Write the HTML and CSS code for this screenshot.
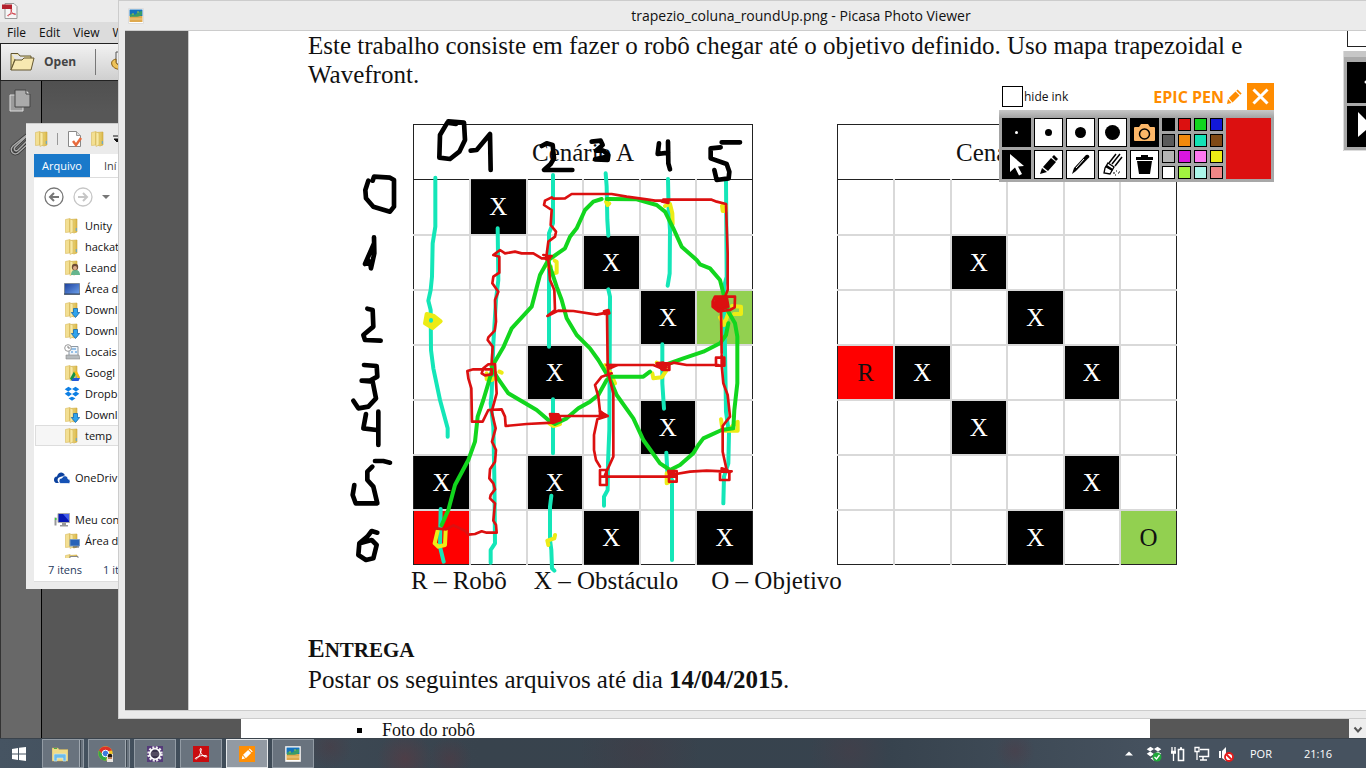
FILE: index.html
```html
<!DOCTYPE html>
<html lang="pt-BR">
<head>
<meta charset="utf-8">
<title>trapezio_coluna_roundUp.png - Picasa Photo Viewer</title>
<link rel="stylesheet" href="styles.css">
</head>
<body>
<svg class="defs" aria-hidden="true">
  <defs>
    <linearGradient id="gold" x1="0" x2="1"><stop offset="0" stop-color="#fdf3b8"/><stop offset=".5" stop-color="#e8cf6c"/><stop offset="1" stop-color="#d9b54a"/></linearGradient>
    <linearGradient id="sky" x1="0" y1="0" x2="1" y2="1"><stop offset="0" stop-color="#1c3f9c"/><stop offset="1" stop-color="#6fa4ee"/></linearGradient>
  </defs>
  <symbol id="folder" viewBox="0 0 16 16"><path d="M1.500 1.500 6 .5V14l-4.500.5Z" fill="#f3df92" stroke="#d8bb5c" stroke-width=".6"/><path d="M6 1.500 13 1v13l-3 1-4-1.500Z" fill="url(#gold)" stroke="#cfa93e" stroke-width=".6"/><path d="M6 1v14.500L9 14V2Z" fill="#f8e9a4" stroke="#cfae50" stroke-width=".5"/><path d="M12.300 10v3" stroke="#58a7e0"/></symbol>
  <symbol id="down" viewBox="0 0 16 16"><use href="#folder"/><path d="M9.500 6.500h4v4h2.200L11.500 15.500 7.300 10.500h2.200Z" fill="#2fa4ee" stroke="#1769ad" stroke-width=".8"/></symbol>
  <symbol id="photo" viewBox="0 0 16 16"><path d="M.5.5h15v15H.5Z" fill="#fff" stroke="#ddd"/><path d="M1.500 1.500h13V8h-13Z" fill="#1572bd"/><path d="M1.500 8h13v6h-13Z" fill="#dfa94e"/><path d="M2 7c2-3 4 1 6-1s3-2 6-3v4c-5 3-8 1-12 2Z" fill="#3a9c68"/><path d="M9 4h2M4 6h2" stroke="#a8c83d"/><path d="M2 11h12" stroke="#f0cd82"/></symbol>
  <symbol id="pencil" viewBox="0 0 16 16"><path d="m1 15 1-5 3.500 4Z"/><path d="m2.800 9 6.700-6.500 4 4L6.500 13.500Z"/><path d="m10.400 1.700 1.200-1.200 4 4-1.200 1.200Z"/></symbol>
  <symbol id="acro" viewBox="0 0 16 16"><path d="M2.500 12.800c1.400 1 3.700-2.600 4.700-5.200S8.800 2.200 7.700 2.400 7 6.300 9 8.600s4.800 3 5 1.800-5-1.400-8.500.2-3.400 1.500-3 2.200Z" fill="none" stroke="currentColor"/></symbol>
</svg>

<div class="desktop">
  <div class="workspace">

    <section class="reader" aria-label="Reader">
      <div class="reader-title">
        <svg class="i16" viewBox="0 0 16 16"><path d="M3 .5h9l3 3v12H3Z" fill="#f6f6f6" stroke="#999"/><path d="M0 1.500h10v4.500H0Z" fill="#b3202c"/><g color="#c8202c"><use href="#acro" x="4" y="4" width="11" height="11"/></g></svg>
      </div>
      <nav class="reader-menu"><button>File</button><button>Edit</button><button>View</button><button>Window</button></nav>
      <div class="reader-tools">
        <button class="open">
          <svg width="25" height="20" viewBox="0 0 25 20"><path d="M1 1.500h7l2 2.500h11v3M1 1.500V18l4-11" fill="#f1e2a5" stroke="#5f542f"/><path d="M1 18 5 8h7l2-2h10l-3 12Z" fill="#f7e8b1" stroke="#65572f"/></svg>
          <span>Open</span>
        </button>
        <i class="tool-rule"></i>
        <svg width="20" height="22" viewBox="0 0 20 22"><path d="M6 1h12v12H6Z" fill="#eee" stroke="#555"/><path d="M6 8c-4 1-5 3-4 6s6 5 12 5v-4c-5 0-8-2-8-4Z" fill="#eec35a" stroke="#865c12"/></svg>
      </div>
      <div class="reader-body">
        <aside class="reader-side">
          <svg width="22" height="24" viewBox="0 0 22 24"><path d="M1 6h13v16H1Z" fill="#9b9b9b" stroke="#ddd"/><path d="M6 1h11l4 4v13H6Z" fill="#aaa" stroke="#444"/><path d="M17 1v4h4" fill="#ddd" stroke="#444"/></svg>
          <svg width="22" height="24" viewBox="0 0 22 24"><path d="m19 3-13 12c-2 3 1 5 3 3L19 8M20 1 4 14c-5 5 2 11 6 6l10-9" fill="none" stroke="#333" stroke-width="3"/><path d="m19 3-13 12c-2 3 1 5 3 3L19 8M20 1 4 14c-5 5 2 11 6 6l10-9" fill="none" stroke="#aaa" stroke-width="1.500"/></svg>
        </aside>
        <div class="reader-canvas"><div class="reader-page"><ul><li>Foto do robô</li></ul></div></div>
        <div class="reader-scroll"><svg width="10" height="8" viewBox="0 0 10 8"><path d="m1.500 1.500 3.500 4 3.500-4" fill="none" stroke="#555" stroke-width="2"/></svg></div>
      </div>
    </section>

    <section class="explorer" aria-label="temp">
      <div class="ex-title">
        <svg class="i16"><use href="#folder"/></svg><i></i>
        <svg class="i16" viewBox="0 0 16 16"><path d="M1.500.5h8l4 4v11h-12Z" fill="#fff" stroke="#888"/><path d="M9.500.5v4h4" fill="#ddd" stroke="#999"/><path d="m6 10 3 4 5-7" fill="none" stroke="#e86b3d" stroke-width="2.500"/></svg>
        <svg class="i16"><use href="#folder"/></svg>
        <svg width="8" height="8" viewBox="0 0 8 8"><path d="M0 1h8M1 4h6L4 7Z" stroke="#111" fill="#111"/></svg>
      </div>
      <div class="ex-tabs"><button class="file">Arquivo</button><button>Iní</button></div>
      <div class="ex-nav">
        <svg width="20" height="20" viewBox="0 0 20 20" fill="none" stroke="#777"><circle cx="10" cy="10" r="9" stroke-width="1.300"/><path d="M15 10H6m4-4-4 4 4 4" stroke-width="2"/></svg>
        <svg width="20" height="20" viewBox="0 0 20 20" fill="none" stroke="#c6c6c6"><circle cx="10" cy="10" r="9" stroke-width="1.300"/><path d="M5 10h9m-4-4 4 4-4 4" stroke-width="2"/></svg>
        <svg width="8" height="4" viewBox="0 0 8 4"><path d="M0 0h8L4 4Z" fill="#777"/></svg>
      </div>
      <ul class="tree">
        <li><svg class="i16"><use href="#folder"/></svg><a href="#">Unity</a></li>
        <li><svg class="i16"><use href="#folder"/></svg><a href="#">hackat</a></li>
        <li><svg class="i16" viewBox="0 0 16 16"><use href="#folder"/><path d="M7 15c0-7 9-7 9 0Z" fill="#66b58d"/><circle cx="11" cy="7" r="3.200" fill="#6f4b35"/><circle cx="11" cy="8" r="2" fill="#d8a989"/></svg><a href="#">Leand</a></li>
        <li><svg class="i16" viewBox="0 0 16 16"><path d="M.5 2.500h15v11H.5Z" fill="url(#sky)" stroke="#7b8899"/><path d="M0 13h16" stroke="#32435a"/></svg><a href="#">Área d</a></li>
        <li><svg class="i16"><use href="#down"/></svg><a href="#">Downl</a></li>
        <li><svg class="i16"><use href="#down"/></svg><a href="#">Downl</a></li>
        <li><svg class="i16" viewBox="0 0 16 16"><path d="M5 2.500h9v9H5Z" fill="#eef4fa" stroke="#8d98a3"/><path d="M7 5h5M7 8h2m2 0h2" stroke="#3d8cd5"/><path d="M2 11h13l1 4H2Z" fill="#b5babd" stroke="#888" stroke-width=".6"/><circle cx="4" cy="4" r="3.300" fill="#fff" stroke="#999"/><path d="M4 2v2h2" fill="none" stroke="#666" stroke-width=".8"/></svg><a href="#">Locais</a></li>
        <li><svg class="i16" viewBox="0 0 16 16"><use href="#folder"/><path d="m10 6.500-4 7 2 2.500 4-7Z" fill="#159348"/><path d="M10 6.500h3l3.500 6.500h-3Z" fill="#fbbc14"/><path d="M9 13h7l-1.500 3H7.500Z" fill="#2459d8"/></svg><a href="#">Googl</a></li>
        <li><svg class="i16" viewBox="0 0 16 16"><path d="m4.500.8 3.500 2.200-3.800 2.500L.7 3.200Zm7 0 3.800 2.400L12 5.500 8 3ZM.7 7.800l3.500-2.300L8 8l-3.500 2.500Zm11.300-2.300 3.300 2.300-3.800 2.700L8 8Zm-4 5.300 3.500 1.500L8 14.800l-3.500-2.500Z" fill="#0d7fe4"/></svg><a href="#">Dropb</a></li>
        <li><svg class="i16"><use href="#down"/></svg><a href="#">Downl</a></li>
        <li class="current"><svg class="i16"><use href="#folder"/></svg><a href="#">temp</a></li>
        <li class="root"><svg class="i16" viewBox="0 0 16 16"><path d="M0 10c0-3 2-3.500 3-3.500C4 2 9 1 11 5.500L6 7c-3 1-3 4-1 6H2.500C1 13 0 11.500 0 10Z" fill="#0b419e"/><path d="M5 11c0-2 1.500-3 3-3 1-3 5.500-3 6 1 3 .5 2.500 4.500.5 4.500H7C6 13.500 5 12.500 5 11Z" fill="#1552b5" stroke="#fff" stroke-width=".7"/></svg><a href="#">OneDriv</a></li>
        <li class="root"><svg class="i16" viewBox="0 0 16 16"><path d="M.5 5.500h2v8h-2Z" fill="#999"/><path d="M1 6h1.500v2H1Z" fill="#3ccc41"/><path d="M4 1.500h11.500v9H4Z" fill="#0718b4" stroke="#aaa"/><path d="m9 2 6 7V2Z" fill="#435dec"/><path d="M8 11h4v2h2v1.500H6V13h2Z" fill="#999"/></svg><a href="#">Meu con</a></li>
        <li><svg class="i16" viewBox="0 0 16 16"><use href="#folder"/><path d="M6 6.500h9.500v6.500H6Z" fill="#2863b8" stroke="#789bc4"/><path d="M9 14h6" stroke="#555"/></svg><a href="#">Área d</a></li>
        <li><svg class="i16" viewBox="0 0 16 16"><use href="#folder"/><path d="M6 2.500h8v10H6Z" fill="#fff" stroke="#888"/></svg><a href="#">Docu</a></li>
      </ul>
      <div class="ex-status"><span>7 itens</span><span>1 it</span></div>
    </section>

    <section class="viewer" aria-label="Picasa Photo Viewer">
      <header class="viewer-title"><svg class="i16"><use href="#photo"/></svg><h1>trapezio_coluna_roundUp.png - Picasa Photo Viewer</h1></header>
      <div class="viewer-body">
        <article class="sheet">
          <p>Este trabalho consiste em fazer o robô chegar até o objetivo definido. Uso mapa trapezoidal e<br>Wavefront.</p>
          <div class="scenarios">
            <table>
              <thead><tr><th colspan="6">Cenário A</th></tr></thead>
              <tbody>
                <tr><td></td><td class="x">X</td><td></td><td></td><td></td><td></td></tr>
                <tr><td></td><td></td><td></td><td class="x">X</td><td></td><td></td></tr>
                <tr><td></td><td></td><td></td><td></td><td class="x">X</td><td class="goal"></td></tr>
                <tr><td></td><td></td><td class="x">X</td><td></td><td></td><td></td></tr>
                <tr><td></td><td></td><td></td><td></td><td class="x">X</td><td></td></tr>
                <tr><td class="x">X</td><td></td><td class="x">X</td><td></td><td></td><td></td></tr>
                <tr><td class="robot"></td><td></td><td></td><td class="x">X</td><td></td><td class="x">X</td></tr>
              </tbody>
            </table>
            <table>
              <thead><tr><th colspan="6">Cenário B</th></tr></thead>
              <tbody>
                <tr><td></td><td></td><td></td><td></td><td></td><td></td></tr>
                <tr><td></td><td></td><td class="x">X</td><td></td><td></td><td></td></tr>
                <tr><td></td><td></td><td></td><td class="x">X</td><td></td><td></td></tr>
                <tr><td class="robot">R</td><td class="x">X</td><td></td><td></td><td class="x">X</td><td></td></tr>
                <tr><td></td><td></td><td class="x">X</td><td></td><td></td><td></td></tr>
                <tr><td></td><td></td><td></td><td></td><td class="x">X</td><td></td></tr>
                <tr><td></td><td></td><td></td><td class="x">X</td><td></td><td class="goal">O</td></tr>
              </tbody>
            </table>
            <svg class="ink" viewBox="0 0 1260 1470" aria-hidden="true">
              <g class="cyan">
                <path d="M286 203V350L278 400 276 500 272 540 265 572 272 600 273 720 280 775 300 870 323 955V980"/>
                <path d="M473 355 475 510 468 570 460 700 455 850 452 880 460 950 463 1100 465 1300 452 1320V1358"/>
                <path d="M639 195V340L627 370V710M639 868V1030M634 1157 630 1190V1290L634 1320 636 1375 643 1382"/>
                <path d="M797 190 800 230 802 330 805 377M805 538 810 560 808 960 804 1060 803 1140 792 1160V1187"/>
                <path d="M984 207 986 300 990 360 989 490 983 527M967 703V820L972 896M979 1028 982 1085 996 1110V1350"/>
                <path d="M1158 210 1160 500 1152 530 1155 720 1158 905 1167 970 1165 1060 1152 1100 1150 1180"/>
                <path d="M302 1197 300 1310 311 1355"/>
              </g>
              <g class="yellow">
                <path class="dot" d="M260 612 255 640 278 654 302 634 282 618Z"/>
                <path d="M798 275 803 285 808 280M975 288 990 282 997 310 998 342M1146 287H1157V303H1148Z"/>
                <path d="M625 470H633M644 452 650 455V488L642 490M1182 612H1203V590L1176 588M1140 622 1152 645 1165 610"/>
                <path d="M440 790V808L455 810 470 800M478 785 485 788M628 940 640 948 660 942M795 765 810 785 825 820"/>
                <path d="M937 790 940 805 965 802 980 780 950 758M980 1090V1120L990 1115M1143 928 1148 962H1193V935L1175 950"/>
                <path d="M645 1275 643 1285 622 1292 625 1305M293 1262 284 1300 295 1310 315 1305 317 1262"/>
              </g>
              <path class="cyan" d="M273 630V632"/>
              <g class="green">
                <path d="M305 1245 325 1200 345 1125 385 1050 405 995 413 920 430 870 445 820 462 760 490 712 515 655 575 590 600 495 625 450 675 415 690 380 710 355 735 300 760 275 785 267M800 267 890 268 950 285 975 305 1000 355 1025 410 1070 450 1080 463 1110 475 1140 510 1150 550 1165 605 1185 640 1192 680V820L1183 900 1180 955 1145 960 1090 985 1075 1005 1060 1030 1020 1065 990 1080 960 1060 910 990 880 925 830 855 805 795"/>
                <path d="M625 455 650 530 665 570 680 625 710 675 750 715 775 750 805 800H910L930 785M975 765 1030 745 1090 725 1140 700 1158 675 1165 640M800 810 775 855 750 875 715 895 680 925 645 942 625 930 590 900 505 850 470 800 455 770"/>
              </g>
              <g class="red">
                <path d="M285 1255 318 1258 340 1246 375 1262 385 1274 405 1272 425 1264 440 1268H470L468 1245 460 1232 465 1180 450 1165 452 1155 465 1138 460 1120 448 1105 450 1078 465 1055 468 1020 456 995 467 955 455 905 470 850 465 762 445 763 430 775 425 790 435 796 455 793V778L435 778"/>
                <path d="M425 778 400 778 382 783 385 805 394 835 396 935H428L445 900 485 898 495 920 497 948 560 942 640 938 660 930M455 760 458 710 443 690 445 682 464 662 468 635 465 570 475 545 457 520 460 500 478 488V440L460 435 480 420 495 430 525 425 545 430H580L605 445 630 445"/>
                <path d="M610 435 635 438 618 448 625 395 645 380 648 365 632 345 635 300 612 285 615 272 635 262 640 266 675 265 695 252H815L860 260 920 268 945 272H985V279L965 274M970 269H1115L1130 275 1158 282 1160 345 1163 430V540L1155 560"/>
                <path class="blob" d="M1130 563 1160 560 1165 590 1140 600 1122 590Z"/>
                <path d="M1118 575 1125 560 1185 560 1184 592 1170 600 1135 604 1118 590Z"/>
                <path d="M1143 600 1145 730M1128 743H1153V767H1128ZM1145 735V765L1150 820 1163 855 1170 920 1148 948V1025L1160 1080M1140 1085H1168V1110H1140ZM1175 1084H1135M1150 1084 1100 1082 1050 1085 1008 1092M987 1083H1010V1115H987ZM982 1100H790M780 1080H800V1125H780ZM800 1100H780"/>
                <path class="blob" d="M1145 1075 1160 1080 1170 1086 1145 1085ZM985 1083 1000 1085 1008 1100 990 1100ZM950 760 970 758 980 772 965 778ZM630 912 655 913 662 930 635 935ZM780 903 790 912 780 922ZM792 604 805 600 808 610 794 612Z"/>
                <path d="M625 450 630 510 643 540 645 600 622 618 655 602 700 603 770 614 800 608M801 610 803 765H940L960 773 1000 758 1040 765H1135M968 760H988V780H968Z"/>
                <path d="M800 765 830 766 810 775 803 770 805 790 820 850V1040L795 1095M815 790 785 800 765 825 775 860 780 905 803 918 772 928 762 975V1020L768 1050 780 1070M640 918H803"/>
              </g>
              <g class="black">
                <path d="M348 42 322 38 300 75 298 143 330 147 358 125 375 90 372 38 325 34M392 122 410 120 450 72 452 180"/>
                <path d="M605 108 620 100 638 105 642 145 632 162 612 180H697M755 95 782 92 788 105 768 122 790 122 805 135 803 150 765 148 800 140"/>
                <path d="M957 100 953 132 985 128M984 95 985 160 990 178M1142 112 1112 115V145L1160 162 1168 185 1166 205 1130 210 1123 180M1145 97H1200"/>
                <path d="M85 212 76 240 78 265 100 290 150 305 162 290V210L150 203 102 200 98 212M102 382 103 430 93 475 90 455 75 462 102 400"/>
                <path d="M82 596 98 600 100 650 70 675 75 690 122 692M72 765 110 768 112 800 90 812H65L98 815 108 865 85 890 55 895 40 872"/>
                <path d="M78 912 70 955 110 960M115 905V1005M150 1058 130 1053H105M97 1070 82 1085V1110L100 1130 112 1180H47L38 1155 43 1125"/>
                <path d="M112 1268 95 1263 82 1280 58 1300 55 1335 78 1350 100 1345 110 1305 95 1290 65 1298"/>
              </g>
            </svg>
          </div>
          <div class="legend"><span>R – Robô</span><span>X – Obstáculo</span><span>O – Objetivo</span></div>
          <h2>Entrega</h2>
          <p>Postar os seguintes arquivos até dia <b>14/04/2015</b>.</p>
        </article>
        <div class="sheet-edge"></div>
        <svg class="sheet-tools" width="23" height="100" viewBox="0 0 23 100"><path d="M0 0h23v100H0Z" fill="#aaa"/><path d="M0 0h23v6H0Z" fill="#c7c7c7"/><path d="M.5 0v99.500H23" fill="none" stroke="#ddd"/><path d="M4 11h19v41H4Zm0 44h19v41H4Z"/><circle cx="23" cy="31" r="1.500" fill="#fff"/><path d="m15 61 8 8v10l-8 7Z" fill="#fff"/></svg>
      </div>
    </section>

    <section class="pen" aria-label="Epic Pen">
      <header class="pen-head">
        <input type="checkbox" id="hide"><label for="hide">hide ink</label>
        <strong>EPIC PEN</strong>
        <svg class="i16 orange" width="16" height="16"><use href="#pencil"/></svg>
        <button class="close" aria-label="Close"><svg width="17" height="17" viewBox="0 0 17 17"><path d="m1.500 1.500 14 14m0-14-14 14" stroke="#fff" stroke-width="3"/></svg></button>
      </header>
      <div class="pen-body">
        <div class="pen-tools">
          <button class="on" aria-label="Size 1"><svg viewBox="0 0 27 27"><circle cx="13.500" cy="13.500" r="1.500" fill="#fff"/></svg></button>
          <button aria-label="Size 2"><svg viewBox="0 0 27 27"><circle cx="13.500" cy="13.500" r="3.500"/></svg></button>
          <button aria-label="Size 3"><svg viewBox="0 0 27 27"><circle cx="13.500" cy="13.500" r="5.500"/></svg></button>
          <button aria-label="Size 4"><svg viewBox="0 0 27 27"><circle cx="13.500" cy="13.500" r="7.500"/></svg></button>
          <button class="on" aria-label="Screenshot"><svg viewBox="0 0 27 27"><path d="M4 8h4l2-3h7l2 3h4q1 0 1 1v12q0 1-1 1H4q-1 0-1-1V9q0-1 1-1Z" fill="#fdb768"/><circle cx="13.500" cy="15" r="5" fill="none" stroke="#000" stroke-width="1.500"/></svg></button>
          <button class="on" aria-label="Cursor"><svg viewBox="0 0 27 27"><path d="m7 3 14 12-6 .5 4 7.500-3 1.500-4-8L7 21Z" fill="#fff"/></svg></button>
          <button aria-label="Pencil"><svg viewBox="0 0 27 27"><path d="m5 23 2-6 5 4Zm3-7 8-9 5 4-8 9Zm9-10 2-2 4 4-2 2Z"/></svg></button>
          <button aria-label="Highlighter"><svg viewBox="0 0 27 27"><path d="m5 23 2-6L19 4q3-1 3.500 2L9 20Z"/><path d="m9 17 8-9" stroke="#fff"/></svg></button>
          <button aria-label="Eraser"><svg viewBox="0 0 27 27"><path d="m10 12 7-9m-4 10 8-10m-5 12 7-9" fill="none" stroke="#000" stroke-width="1.500"/><path d="m9 12 6 4-4 7-6-1 1-5Z" fill="#fff" stroke="#000" stroke-width="1.300"/><path d="m8 14 6 4-1 2-7-4Z"/><path d="M14 22h2m1-2h1m1 2h1m-4 2h1m3-3h1" stroke="#000"/></svg></button>
          <button aria-label="Clear"><svg viewBox="0 0 27 27"><path d="M5 6h17v3H5Zm5-2h7v2h-7ZM6 10h15l-2 13H8Z"/><path d="M5 9.500h17" stroke="#fff"/></svg></button>
        </div>
        <div class="swatches">
          <button class="c1" aria-label="black"></button><button class="c2" aria-label="red"></button><button class="c3" aria-label="green"></button><button class="c4" aria-label="blue"></button>
          <button class="c5" aria-label="dark grey"></button><button class="c6" aria-label="orange"></button><button class="c7" aria-label="turquoise"></button><button class="c8" aria-label="brown"></button>
          <button class="c9" aria-label="grey"></button><button class="c10" aria-label="purple"></button><button class="c11" aria-label="pink"></button><button class="c12" aria-label="yellow"></button>
          <button class="c13" aria-label="white"></button><button class="c14" aria-label="lime"></button><button class="c15" aria-label="aqua"></button><button class="c16" aria-label="salmon"></button>
        </div>
        <div class="active-colour"></div>
      </div>
    </section>
  </div>

  <footer class="taskbar">
    <button class="start" aria-label="Start"><svg width="14" height="14" viewBox="0 0 14 14"><path d="m0 2 6-1v5.500H0Zm7-1.200L14 0v6.500H7ZM0 7.500h6V13l-6-1Zm7 0h7V14l-7-1Z" fill="#fff"/></svg></button>
    <div class="apps">
      <button class="stack" aria-label="Explorer"><svg class="i16" viewBox="0 0 16 16"><path d="M0 2h6l1 1.500h9V15H0Z" fill="#f0dc86" stroke="#c9ad57" stroke-width=".5"/><path d="M2 2.500h3" stroke="#4cab42"/><path d="M2 15V9q0-1 1-1h10q1 0 1 1v6h-3v-3H5v3Z" fill="#6dbce8" stroke="#c6eaff" stroke-width=".6"/></svg></button>
      <button class="stack" aria-label="Chrome"><svg class="i16" viewBox="0 0 16 16"><circle cx="7.500" cy="7.500" r="7.200" fill="#f5c829"/><path d="M1 4.500a7.200 7.200 0 0 1 13 0l-7 1-2 3Z" fill="#de3127"/><path d="M1 4.500A7.200 7.200 0 0 0 8 14.700l1-4-4-2Z" fill="#33a747"/><circle cx="7.500" cy="7.500" r="3.300" fill="#3b7be0" stroke="#fff"/><path d="M9 8h6v8H9Z" fill="#e8e4df"/><circle cx="12" cy="10" r="2.300" fill="#201915"/><path d="M10 11h4v2h-4Z" fill="#b97e5b"/></svg></button>
      <button aria-label="Eclipse"><svg class="i16" viewBox="0 0 16 16"><path d="M0 0h16v16H0Z" fill="#553b7a"/><circle cx="8" cy="8" r="6.500" fill="none" stroke="#eee" stroke-width="2.500" stroke-dasharray="2 1.400"/><circle cx="8" cy="8" r="5.200" fill="#38324a" stroke="#fff" stroke-width="1.600"/><path d="M4 7h8M4 9h8" stroke="#6c6477"/></svg></button>
      <button aria-label="Adobe Reader"><svg class="i16" viewBox="0 0 16 16"><path d="M0 0h16v16H0Z" fill="#c90c0f"/><g color="#fff"><use href="#acro" width="16" height="16"/></g></svg></button>
      <button class="active" aria-label="Epic Pen"><svg class="i16" viewBox="0 0 16 16"><path d="M0 0h16v16H0Z" fill="#ff8f05"/><use href="#pencil" x="2" y="2" width="12" height="12" fill="#fff"/></svg></button>
      <button aria-label="Picasa Photo Viewer"><svg class="i16"><use href="#photo"/></svg></button>
    </div>
    <div class="tray">
      <svg width="8" height="5" viewBox="0 0 8 5"><path d="m0 4.500 4-4 4 4Z" fill="#fff"/></svg>
      <svg class="i16" viewBox="0 0 16 16"><path d="m4.500.8 3.500 2.200-3.800 2.500L.7 3.200Zm7 0 3.800 2.400L12 5.500 8 3ZM.7 7.800l3.500-2.300L8 8l-3.500 2.500Zm11.300-2.300 3.300 2.300-3.800 2.700L8 8Zm-4 5.300 3.500 1.500L8 14.800l-3.500-2.500Z" fill="#fff"/><circle cx="11" cy="11" r="4.500" fill="#21a83c"/><path d="m8.500 11 2 2 3-4" fill="none" stroke="#fff" stroke-width="1.300"/></svg>
      <svg class="i16" viewBox="0 0 16 16" fill="none" stroke="#fff"><path d="M8.500 3.500h5v11h-5ZM10 2h2" stroke-width="1.600"/><path d="M2 1v4m3-4v4M1 5.500h5M1 7h5M3.500 7v8" stroke-width="1.300"/></svg>
      <svg class="i16" viewBox="0 0 16 16" fill="none" stroke="#fff"><path d="M6 3.500h8.500v7H5M9 11v3m-3 0h7" stroke-width="1.500"/><path d="M1 1.500h4v4H1ZM3 6v8" stroke-width="1.300"/></svg>
      <svg class="i16" viewBox="0 0 16 16"><path d="M1 5h2v7H1Zm3 0 4-4v14l-4-3Z" fill="#fff"/><circle cx="11" cy="11" r="4" fill="#fff" stroke="#e41b1b" stroke-width="1.800"/><path d="m8.500 8.500 5 5" stroke="#e41b1b" stroke-width="1.800"/></svg>
      <span class="lang">POR</span>
      <time>21:16</time>
    </div>
  </footer>
</div>
</body>
</html>
```
FILE: styles.css
```css
* { box-sizing: border-box; }
body { margin: 0; font: 12px/20px "Open Sans", "Noto Sans", sans-serif; color: #111; }
button { font: inherit; color: inherit; border: 0; padding: 0; background: none; }
svg { display: block; flex: none; }
ul { list-style: none; margin: 0; padding: 0; }
.defs { position: absolute; width: 0; height: 0; }
.i16 { width: 16px; height: 16px; }
.desktop { height: 100vh; display: flex; flex-direction: column; overflow: hidden; }
.workspace { flex: 1; min-height: 0; position: relative; overflow: hidden; }

/* document reader behind everything */
.reader { height: 100%; display: flex; flex-direction: column; background: #575757; }
.reader-title { height: 22px; padding: 3px 2px; background: #ebebeb; }
.reader-menu { display: flex; gap: 13px; height: 21px; padding-left: 7px; background: #dcdcdc; }
.reader-tools { display: flex; align-items: center; gap: 14px; height: 38px; padding-left: 9px; background: linear-gradient(#f2f2f2, #cfcfcf); border: 1px solid #222; border-right: 0; }
.open { display: flex; align-items: center; gap: 9px; font-weight: 700; color: #444; margin-right: 5px; }
.tool-rule { width: 1px; height: 26px; background: #777; }
.reader-body { flex: 1; min-height: 0; display: flex; }
.reader-side { width: 42px; border-left: 1px solid #333; border-right: 1px solid #000; background: #686868; padding: 8px; display: flex; flex-direction: column; gap: 19px; }
.reader-canvas { flex: 1; padding: 0 199px; display: flex; background: linear-gradient(#505050, #575757 30px); }
.reader-page { flex: 1; background: #fff; display: flex; align-items: flex-end; padding-left: 116px; font: 18px/15px "Liberation Serif", serif; }
.reader-page li { display: flex; align-items: center; gap: 20px; }
.reader-page li::before { content: ""; width: 5px; height: 5px; background: #000; }
.reader-scroll { width: 17px; background: #eee; display: flex; align-items: flex-end; justify-content: center; padding-bottom: 4px; }

/* file explorer */
.explorer { position: absolute; left: 26px; top: 123px; width: 93px; height: 466px; overflow: hidden; display: flex; flex-direction: column; background: #fff; border: 1px solid #ccc; border-right: 0; border-bottom: 7px solid #ebebeb; border-left: 0; box-shadow: inset 8px 0 #ebebeb; padding-left: 8px; font-size: 11px; }
.ex-title { flex: none; height: 30px; display: flex; align-items: center; gap: 7px; background: #ebebeb; }
.ex-title i { flex: none; width: 1px; height: 12px; background: #999; }
.ex-title i + svg { margin-left: 2px; }
.ex-tabs { flex: none; height: 24px; display: flex; border-bottom: 1px solid #ddd; }
.ex-tabs button { padding-left: 14px; color: #444; }
.ex-tabs .file { width: 56px; padding: 0; background: #1979ca; color: #fff; }
.ex-nav { flex: none; height: 37px; padding-left: 10px; display: flex; align-items: center; gap: 9px; }
.tree { flex: 1; min-height: 0; overflow: hidden; }
.tree li { height: 21px; display: flex; align-items: center; gap: 5px; padding-left: 30px; white-space: nowrap; }
.tree a { color: #111; text-decoration: none; }
.tree .root { margin-top: 21px; padding-left: 20px; }
.tree .current { margin-left: 1px; padding-left: 28px; background: #f6f6f6; border: 1px solid #ddd; border-right: 0; }
.ex-status { flex: none; height: 24px; display: flex; align-items: center; gap: 21px; padding-left: 14px; color: #26395c; white-space: nowrap; border-bottom: 1px solid #ddd; }

/* photo viewer */
.viewer { position: absolute; left: 118px; right: -116px; top: 0; bottom: 19px; display: flex; flex-direction: column; background: #ebebeb; border: 1px solid #ccc; padding: 0 7px 7px 6px; }
.viewer-title { height: 29px; display: flex; align-items: center; padding-left: 3px; }
.viewer-title h1 { flex: 1; margin: 0 16px 0 0; text-align: center; font-weight: 400; font-size: 14px; }
.viewer-body { position: relative; flex: 1; min-height: 0; background: #575757; padding-left: 63px; border-top: 1px solid #ccc; border-bottom: 1px solid #ccc; overflow: hidden; }
.sheet { height: 100%; background: #fff; border-left: 1px solid #ccc; padding: 0 0 0 119px; font: 25px/29px "Liberation Serif", serif; white-space: nowrap; }
.sheet p { margin: 0; }
.scenarios { position: relative; display: flex; gap: 84px; margin: 35px 0 0 105px; }
.scenarios table { width: 340px; table-layout: fixed; border-collapse: collapse; border: 1px solid #222; text-align: center; }
.scenarios th { height: 55px; padding: 0; font-weight: 400; border-bottom: 1px solid #222; }
.scenarios td { height: 55px; padding: 0; border: 2px solid #d9d9d9; }
.scenarios tr td:first-child { border-left: 1px solid #222; }
.scenarios tr td:last-child { border-right: 1px solid #222; }
.scenarios tbody tr:first-child td { border-top: 1px solid #222; }
.scenarios tbody tr:last-child td { border-bottom: 1px solid #222; }
.scenarios .x { background: #000; color: #fff; }
.scenarios .robot { background: #f00; }
.scenarios .goal { background: #92d050; }
.ink { position: absolute; left: -73px; top: -14px; width: 420px; height: 490px; fill: none; stroke-width: 12px; stroke-linecap: round; stroke-linejoin: round; }
.cyan { stroke: #14e6b8; }
.yellow { stroke: #ecec16; }
.yellow .dot { fill: #ecec16; }
.green { stroke: #12d61e; }
.red { stroke: #dc1010; stroke-width: 8px; }
.red .blob { fill: #dc1010; }
.black { stroke: #000; stroke-width: 14px; }
.legend { display: flex; gap: 27px; margin: 1px 0 39px 103px; }
.legend span + span + span { margin-left: 6px; }
.sheet h2 { margin: 0; font-size: 21px; line-height: 29px; text-transform: uppercase; }
.sheet h2::first-letter { font-size: 25px; }
.sheet-edge { position: absolute; left: 1222px; top: 0; width: 140px; height: 16px; border: 1px solid #222; border-width: 0 0 1px 1px; }
.sheet-tools { position: absolute; left: 1218px; top: 20px; }

/* pen toolbox */
.pen { position: absolute; left: 999px; top: 83px; width: 275px; }
.pen-head { height: 27px; display: flex; align-items: center; padding-left: 3px; background: #fff; }
.pen-head input { appearance: none; width: 21px; height: 21px; margin: 0 1px 0 0; border: 1px solid #000; background: #fff; }
.pen-head label { flex: 1; }
.pen-head strong { color: #ff8c00; font-size: 16px; margin-right: 2px; }
.orange { fill: #ff8c00; }
.close { width: 27px; height: 27px; margin-left: 5px; background: #ff8c00; display: grid; place-items: center; }
.pen-body { display: flex; gap: 3px; padding: 8px 3px 3px; background: linear-gradient(#c8c8c8, #a3a3a3 8px, #a8a8a8); }
.pen-tools { display: grid; grid-template-columns: repeat(5, 29px); gap: 3px; }
.pen-tools button { width: 29px; height: 29px; background: #fff; border: 1px solid #000; }
.pen-tools .on { background: #000; }
.swatches { display: grid; grid-template-columns: repeat(4, 13px); gap: 3px; align-content: start; }
.swatches button { height: 13px; border: 1px solid #000; }
.active-colour { flex: 1; background: #dc1010; }
.c1 { background: #000; } .c2 { background: #dc1010; } .c3 { background: #12d61e; } .c4 { background: #1218d8; }
.c5 { background: #5a5a5a; } .c6 { background: #f28a0c; } .c7 { background: #12e2b6; } .c8 { background: #804a16; }
.c9 { background: #b4b4b4; } .c10 { background: #d816e0; } .c11 { background: #ff78f0; } .c12 { background: #ecec16; }
.c13 { background: #fff; } .c14 { background: #a2f240; } .c15 { background: #acf6ea; } .c16 { background: #f08686; }

/* taskbar */
.taskbar { flex: none; height: 30px; display: flex; align-items: center; color: #fff; border-top: 1px solid #3a434c; background: radial-gradient(circle at 405px 20px, #6b333a66, transparent 28px), radial-gradient(circle at 450px 20px, #60313a55, transparent 22px), radial-gradient(circle at 330px 8px, #55333a55, transparent 22px), radial-gradient(circle at 1015px 12px, #58343f55, transparent 20px), radial-gradient(circle at 850px 12px, #523a4455, transparent 40px), radial-gradient(circle at 640px 12px, #4e343c44, transparent 60px), linear-gradient(90deg, #465462, #38434d 35%, #37434e 65%, #46525f 85%); }
.start { width: 42px; height: 29px; padding-left: 12px; }
.apps { display: flex; gap: 4px; flex: 1; }
.apps button { width: 42px; height: 29px; display: grid; place-items: center; background: #69737e; border: 1px solid #929ba4; }
.apps .stack { padding-right: 6px; background: linear-gradient(90deg, #69737e 36px, #a0a8b0 36px, #a0a8b0 37px, #3f4953 37px, #3f4953 38px, #69737e 38px); }
.apps .active { background: #929aa3; border-color: #e6e9eb; }
.tray { display: flex; align-items: center; gap: 8px; padding-right: 34px; font-size: 11px; }
.tray svg:first-child { margin-right: 5px; }
.lang { margin-left: 8px; }
.tray time { margin-left: 24px; }
```
